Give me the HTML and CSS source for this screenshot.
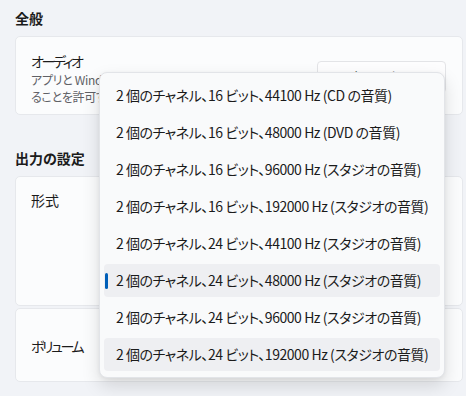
FILE: index.html
```html
<!DOCTYPE html>
<html lang="ja">
<head>
<meta charset="utf-8">
<link rel="stylesheet" href="styles.css">
</head>
<body>
<div class="page">
  <h2 class="section-title first">全般</h2>
  <div class="card card-audio">
    <div class="card-text">
      <div class="card-title kana">オーディオ</div>
      <div class="card-sub">アプリと Windows がこのデバイスを排他的に制御す<br>ることを許可する</div>
    </div>
    <button class="btn">許可しない</button>
  </div>

  <h2 class="section-title">出力の設定</h2>
  <div class="card card-format">
    <div class="card-title">形式</div>
  </div>
  <div class="card card-volume">
    <div class="card-title kana">ボリューム</div>
  </div>

  <div class="menu">
    <div class="item">2 個のチャネル、16 ビット、44100 Hz (CD の音質)</div>
    <div class="item">2 個のチャネル、16 ビット、48000 Hz (DVD の音質)</div>
    <div class="item">2 個のチャネル、16 ビット、96000 Hz (スタジオの音質)</div>
    <div class="item">2 個のチャネル、16 ビット、192000 Hz (スタジオの音質)</div>
    <div class="item">2 個のチャネル、24 ビット、44100 Hz (スタジオの音質)</div>
    <div class="item selected">2 個のチャネル、24 ビット、48000 Hz (スタジオの音質)</div>
    <div class="item">2 個のチャネル、24 ビット、96000 Hz (スタジオの音質)</div>
    <div class="item hover">2 個のチャネル、24 ビット、192000 Hz (スタジオの音質)</div>
  </div>
</div>
</body>
</html>
```

FILE: styles.css
```css
* { box-sizing: border-box; }
html, body {
  margin: 0;
  padding: 0;
  background: #f1f3f7;
  width: 466px;
  height: 396px;
  overflow: hidden;
}
body {
  font-family: "Noto Sans CJK JP", "Noto Sans", sans-serif;
  font-feature-settings: "palt" 1;
  color: #1b1b1b;
}
.page {
  position: relative;
  padding: 8px 3px 0 15px;
  height: 396px;
}
.section-title {
  margin: 0;
  font-size: 14px;
  font-weight: 700;
  line-height: 20px;
  height: 20px;
  padding: 0;
}
.section-title.first { margin-bottom: 8px; }
.card + .section-title { margin-top: 33px; margin-bottom: 8px; }
.card {
  background: #fbfcfd;
  border: 1px solid #e6e8ec;
  border-radius: 5px;
}
.card-audio {
  height: 79px;
  display: flex;
  align-items: flex-start;
  justify-content: space-between;
  padding: 14px 16px 0 15px;
}
.card-text {
  flex: 1;
  min-width: 0;
  overflow: hidden;
  white-space: nowrap;
}
.card-title {
  font-size: 14px;
  line-height: 20px;
}
.kana { letter-spacing: -2.4px; }
.card-sub {
  font-size: 12px;
  line-height: 17px;
  color: #5f6166;
  letter-spacing: -0.3px;
}
.btn {
  flex: none;
  width: 129px;
  height: 32px;
  border: 1px solid #e3e4e7;
  border-radius: 4px;
  background: #fdfdfe;
  font-family: inherit;
  font-feature-settings: "palt" 1;
  font-size: 14px;
  color: #1b1b1b;
  margin-top: 10px;
  margin-left: 8px;
}
.card-format {
  height: 130px;
  padding: 13px 15px;
}
.card-volume {
  margin-top: 2px;
  height: 74px;
  display: flex;
  align-items: center;
  padding: 2px 15px 0;
}
.menu {
  position: absolute;
  left: 99px;
  top: 72px;
  width: 346px;
  display: flex;
  flex-direction: column;
  gap: 4px;
  background: #f9fafb;
  border: 1px solid #e2e4e8;
  border-radius: 8px;
  padding: 6px 4px;
  box-shadow: 0 8px 18px rgba(0, 0, 0, 0.13), 0 1px 4px rgba(0, 0, 0, 0.06);
}
.item {
  position: relative;
  height: 33px;
  border-radius: 4px;
  padding-left: 12px;
  font-size: 14px;
  line-height: 33px;
  letter-spacing: -0.45px;
  white-space: nowrap;
  color: #1b1b1b;
}
.item.selected, .item.hover {
  background: #eeeff2;
}
.item.selected::before {
  content: "";
  position: absolute;
  left: 1px;
  top: 9px;
  width: 3px;
  height: 16px;
  border-radius: 2px;
  background: #005fb8;
}
```
